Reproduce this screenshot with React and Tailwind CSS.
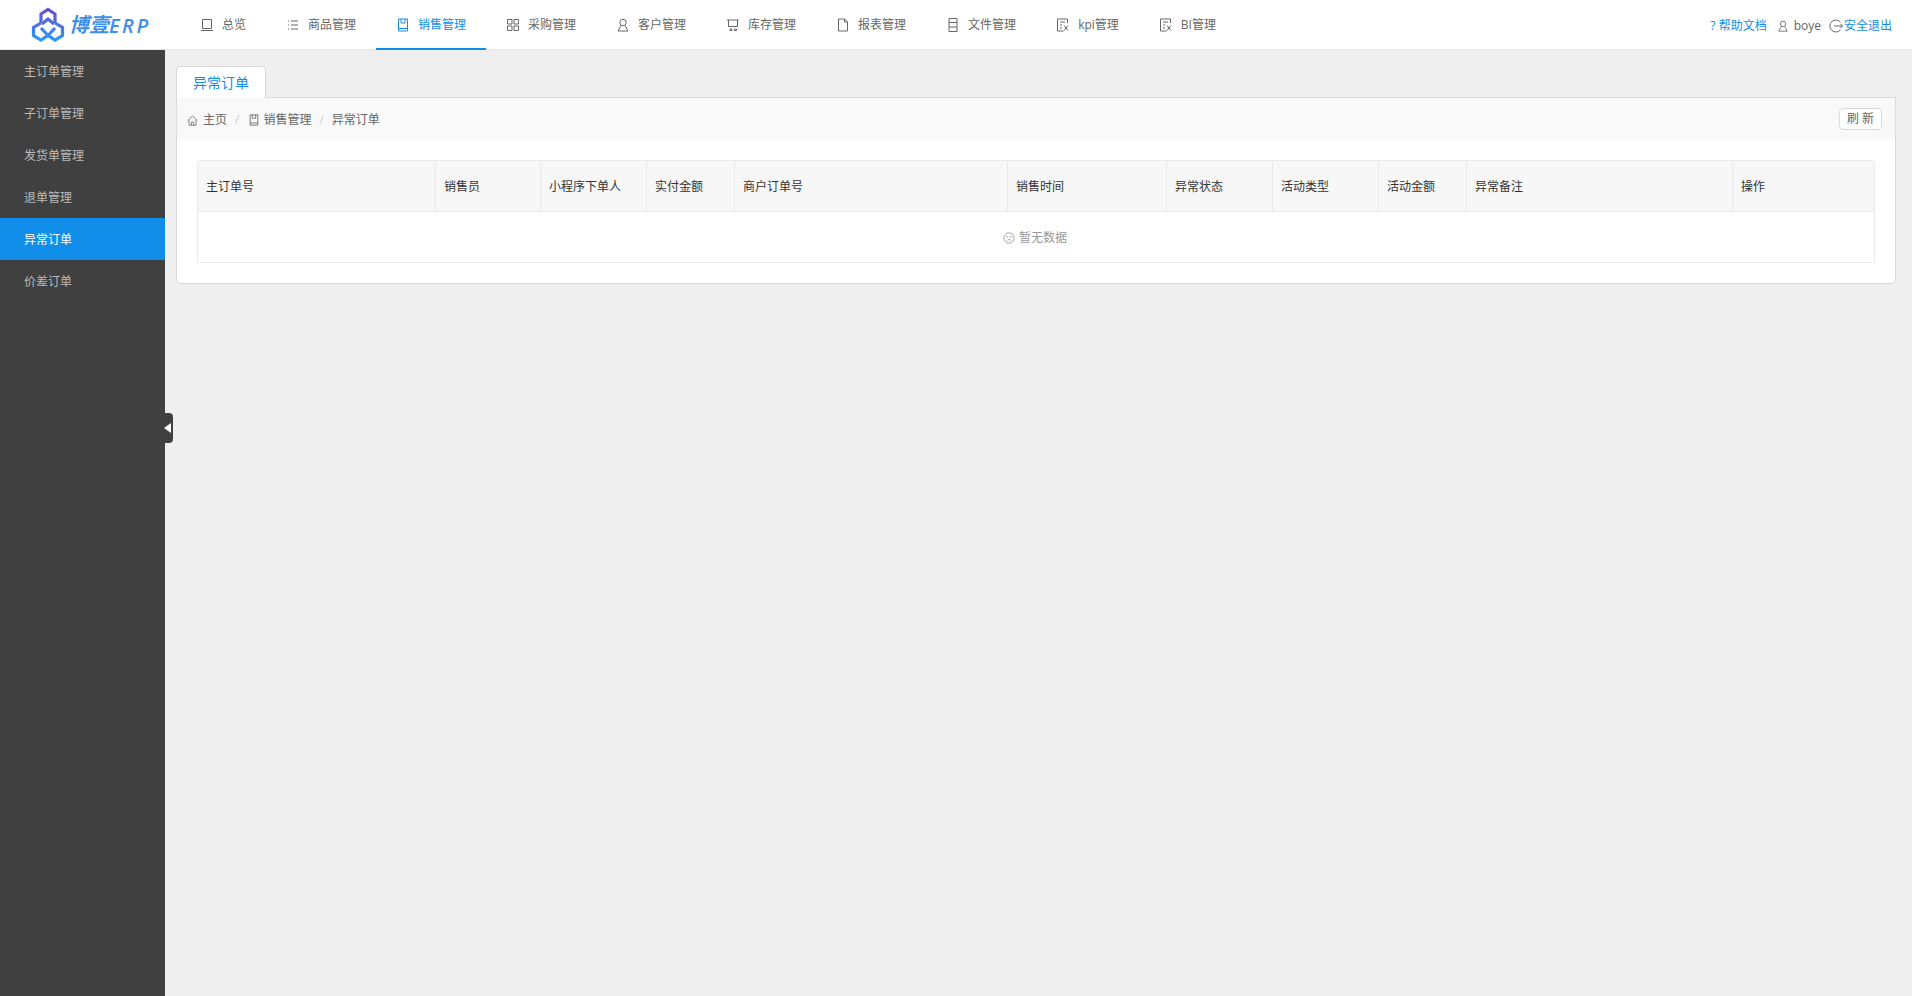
import React from 'react';

const Icon = ({ className = 'w-3.5 h-3.5', children }) => (
  <svg viewBox="0 0 14 14" fill="none" stroke="currentColor" strokeWidth="1" className={`shrink-0 ${className}`}>
    {children}
  </svg>
);

const Laptop = () => (
  <Icon>
    <path d="M2.500 1.500h9v9h-9z" />
    <path d="M1 12.500h12" />
  </Icon>
);
const Bars = () => (
  <Icon>
    <path d="M5 3h7M5 7h7M5 11h7M2 3h1M2 7h1M2 11h1" />
  </Icon>
);
const Save = ({ className }) => (
  <Icon className={className}>
    <path d="M2.500 1h9v12h-9zM2.500 10.500h9M5 1v4h4V1" />
  </Icon>
);
const Grid = () => (
  <Icon>
    <path d="M1.500 1.500h4.500v4.500h-4.500zM8 1.500h4.500v4.500H8zM1.500 8h4.500v4.500h-4.500zM8 8h4.500v4.500H8z" />
  </Icon>
);
const User = ({ className }) => (
  <Icon className={className}>
    <circle cx="7" cy="4.500" r="3.200" />
    <path d="M5 7.500L2 13h10L9 7.500" />
  </Icon>
);
const Cart = () => (
  <Icon>
    <path d="M1 2h12M2.500 2v6.500h9V2" />
    <path d="M4 11h2v1.500H4zM8.500 11h2v1.500h-2z" />
  </Icon>
);
const File = () => (
  <Icon>
    <path d="M2.500 1h6l3 3v9h-9zM8.500 1v3h3" />
  </Icon>
);
const Doc = () => (
  <Icon>
    <path d="M3 .5h8v13H3zM3 4.500h8M3 9h8" />
  </Icon>
);
const Excel = () => (
  <Icon>
    <path d="M11.500 5V1h-10v12h6M4 4h5M4 7h2M4 10h2M8 7.500l4 5M12 7.500l-4 5" />
  </Icon>
);
const Home = () => (
  <Icon className="w-[11px] h-[11px]">
    <path d="M1 7l6-6 6 6M2.500 6v7h9V6M5.500 13V9h3v4" />
  </Icon>
);
const Logout = () => (
  <Icon>
    <path d="M11.500 3.200A6 6 0 1 0 11.500 10.800" />
    <path d="M5 7h8.500M11.500 5l2 2-2 2" />
  </Icon>
);
const Frown = () => (
  <Icon className="w-3 h-3">
    <circle cx="7" cy="7" r="6" />
    <circle cx="4.800" cy="5.500" r=".6" />
    <circle cx="9.200" cy="5.500" r=".6" />
    <path d="M4.800 10.200a2.400 2.400 0 0 1 4.400 0" />
  </Icon>
);

const Logo = () => (
  <svg viewBox="0 0 34 35" className="w-[34px] h-[35px] shrink-0" fill="none" strokeWidth="3.200">
    <defs>
      <linearGradient id="logoGrad" gradientUnits="userSpaceOnUse" x1="0" y1="0" x2="0" y2="35">
        <stop offset="0" stopColor="#6d4abf" />
        <stop offset="0.5" stopColor="#4a72e0" />
        <stop offset="1" stopColor="#2a9df2" />
      </linearGradient>
    </defs>
    <g stroke="url(#logoGrad)">
      <path d="M10 16V7l7-4.500L24 7v9" />
      <path d="M11 17l6-5 6 5" />
      <path d="M10 16l-7.500 4.500v8L10 33l7-4.500L24 33l7.500-4.500v-8L24 16" />
      <path d="M10 21l7 7.500 7-7.500" />
    </g>
  </svg>
);

const navItems = [
  { label: '总览', icon: Laptop },
  { label: '商品管理', icon: Bars },
  { label: '销售管理', icon: Save, active: true },
  { label: '采购管理', icon: Grid },
  { label: '客户管理', icon: User },
  { label: '库存管理', icon: Cart },
  { label: '报表管理', icon: File },
  { label: '文件管理', icon: Doc },
  { label: 'kpi管理', icon: Excel },
  { label: 'BI管理', icon: Excel },
];

const sideItems = ['主订单管理', '子订单管理', '发货单管理', '退单管理', '异常订单', '价差订单'];

const columns = [
  { label: '主订单号', width: 'w-[238px]' },
  { label: '销售员', width: 'w-[105px]' },
  { label: '小程序下单人', width: 'w-[106px]' },
  { label: '实付金额', width: 'w-[88px]' },
  { label: '商户订单号', width: 'w-[273px]' },
  { label: '销售时间', width: 'w-[159px]' },
  { label: '异常状态', width: 'w-[106px]' },
  { label: '活动类型', width: 'w-[106px]' },
  { label: '活动金额', width: 'w-[88px]' },
  { label: '异常备注', width: 'w-[266px]' },
  { label: '操作', width: 'flex-1' },
];

export default function App() {
  return (
    <div className="w-full h-[996px] flex flex-col overflow-hidden bg-[#efefef] text-xs text-[#666666] font-['Open_Sans','Noto_Sans_CJK_SC',sans-serif]">
      <header className="h-[50px] shrink-0 flex bg-white border-b border-[#e4e4e4]">
        <div className="w-[180px] pl-[31px] flex items-center shrink-0">
          <Logo />
          <span className="ml-1 text-[20px] leading-none font-bold italic text-[#3f8fe8]">博壹</span>
          <span className="mt-[3px] text-[20px] leading-none font-semibold italic tracking-[2.500px] text-[#3f8fe8]">ERP</span>
        </div>
        <nav className="flex">
          {navItems.map(({ label, icon: NavIcon, active }) => (
            <div
              key={label}
              className={`h-[50px] px-5 pt-[2px] flex items-center gap-2 border-b-2 ${
                active ? 'border-[#108ee9] text-[#108ee9]' : 'border-transparent'
              }`}
            >
              <NavIcon />
              <span>{label}</span>
            </div>
          ))}
        </nav>
        <div className="ml-auto pr-5 pt-[2px] flex items-center">
          <span className="text-[#108ee9]">? 帮助文档</span>
          <span className="ml-[10px] flex items-center gap-[5px]">
            <User className="w-3 h-3" />
            boye
          </span>
          <span className="ml-2 flex items-center gap-px text-[#108ee9]">
            <span className="text-[#666666]"><Logout /></span>
            安全退出
          </span>
        </div>
      </header>

      <div className="flex-1 flex min-h-0">
        <aside className="relative w-[165px] shrink-0 bg-[#404040]">
          {sideItems.map((item) => (
            <div
              key={item}
              className={`h-[42px] pl-6 pt-[2px] flex items-center ${
                item === '异常订单' ? 'bg-[#108ee9] text-white' : 'text-[#bbbbbb]'
              }`}
            >
              {item}
            </div>
          ))}
          <div className="absolute left-[165px] top-[363px] w-2 h-[30px] bg-[#404040] rounded-r flex items-center justify-center">
            <div className="w-0 h-0 -ml-1 border-y-[5px] border-y-transparent border-r-[7px] border-r-white" />
          </div>
        </aside>

        <main className="flex-1 pl-[11px] pr-4 pt-4">
          <div className="w-[90px] h-[32px] -mb-px relative flex items-center justify-center bg-white border border-b-0 border-[#d9d9d9] rounded-t text-sm text-[#108ee9]">
            异常订单
          </div>
          <section className="h-[187px] bg-white border border-[#d9d9d9] rounded-b">
            <div className="h-[42px] pl-[10px] pr-[13px] pt-[2px] flex items-center bg-[#f9f9f9]">
              <Home />
              <span className="ml-[5px]">主页</span>
              <span className="mx-2 text-[#cccccc]">/</span>
              <span className="ml-px"><Save className="w-3 h-3" /></span>
              <span className="ml-[3px]">销售管理</span>
              <span className="mx-2 text-[#cccccc]">/</span>
              <span>异常订单</span>
              <button className="ml-auto -mt-[2px] w-[43px] h-[22px] bg-white border border-[#d9d9d9] rounded text-xs text-[#666666]">
                刷 新
              </button>
            </div>
            <div className="mt-5 mx-5 h-[103px] border border-[#e9e9e9] rounded-t">
              <div className="h-[51px] flex bg-[#f7f7f7] border-b border-[#e9e9e9] text-[#333333]">
                {columns.map(({ label, width }, i) => (
                  <div
                    key={label}
                    className={`${width} pl-2 pt-[2px] flex items-center ${i < columns.length - 1 ? 'border-r border-[#e9e9e9]' : ''}`}
                  >
                    {label}
                  </div>
                ))}
              </div>
              <div className="h-[50px] pt-[2px] flex items-center justify-center gap-1 pr-[2px] text-[#999999]">
                <Frown />
                暂无数据
              </div>
            </div>
          </section>
        </main>
      </div>
    </div>
  );
}
